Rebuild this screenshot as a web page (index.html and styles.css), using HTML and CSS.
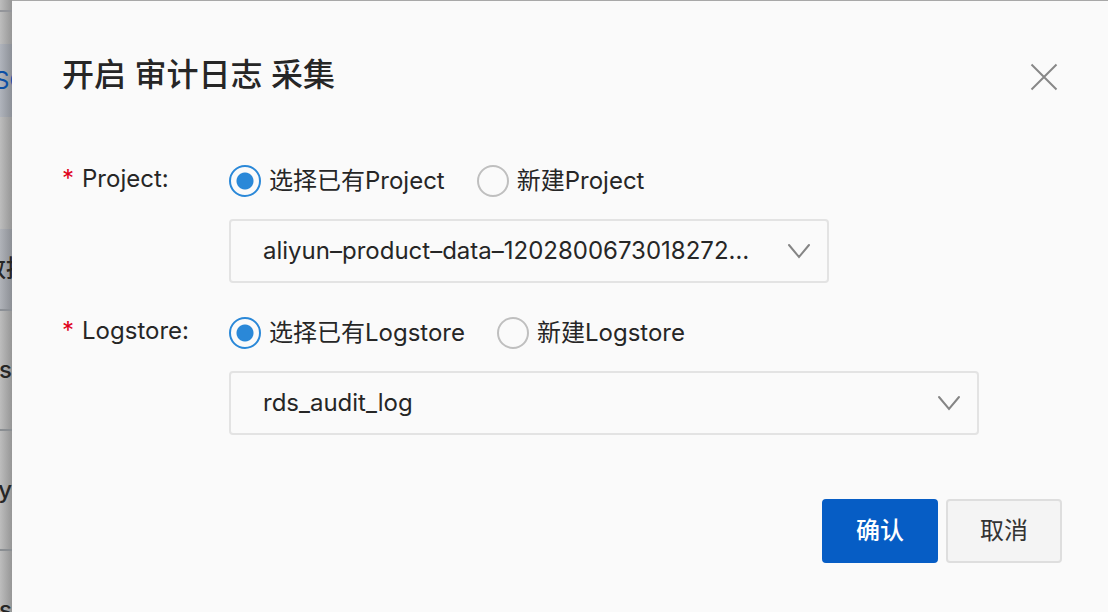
FILE: index.html
```html
<!DOCTYPE html>
<html lang="zh-CN">
<head>
<meta charset="utf-8">
<title>开启 审计日志 采集</title>
<link rel="stylesheet" href="styles.css">
</head>
<body>
<div class="page">
  <div class="backdrop" aria-hidden="true">
    <div class="strip strip-top"></div>
    <div class="strip strip-gap"></div>
    <div class="strip strip-tab"><span>SQ</span></div>
    <div class="strip strip-space"></div>
    <div class="strip strip-head"><span>数据</span></div>
    <div class="strip strip-row"><span>ns</span></div>
    <div class="strip strip-row"><span>ny</span></div>
    <div class="strip strip-row"><span>ns</span></div>
  </div>
  <main class="dialog" role="dialog" aria-labelledby="dialog-title">
    <header class="dialog-header">
      <h1 class="dialog-title" id="dialog-title">开启 审计日志 采集</h1>
      <button class="close" type="button" aria-label="关闭">
        <svg width="28" height="28" viewBox="0 0 28 28" fill="none" stroke="#878787" stroke-width="2"><path d="M1.500 1.500 26.500 26.500M26.500 1.500 1.500 26.500"/></svg>
      </button>
    </header>
    <form class="form">
      <div class="field">
        <div class="label" id="project-label"><span class="required">*</span><span>Project:</span></div>
        <div class="controls">
          <div class="radios" role="radiogroup" aria-labelledby="project-label">
            <label class="radio"><input type="radio" name="project" checked><span>选择已有Project</span></label>
            <label class="radio"><input type="radio" name="project"><span>新建Project</span></label>
          </div>
          <div class="select select-medium">
            <select aria-labelledby="project-label"><option>aliyun–product–data–1202800673018272…</option></select>
            <svg width="24" height="16" viewBox="0 0 24 16" fill="none" stroke="#858585" stroke-width="2" stroke-linecap="round"><path d="M2 2 12 14 22 2"/></svg>
          </div>
        </div>
      </div>
      <div class="field">
        <div class="label" id="logstore-label"><span class="required">*</span><span>Logstore:</span></div>
        <div class="controls">
          <div class="radios" role="radiogroup" aria-labelledby="logstore-label">
            <label class="radio"><input type="radio" name="logstore" checked><span>选择已有Logstore</span></label>
            <label class="radio"><input type="radio" name="logstore"><span>新建Logstore</span></label>
          </div>
          <div class="select select-wide">
            <select aria-labelledby="logstore-label"><option>rds_audit_log</option></select>
            <svg width="24" height="16" viewBox="0 0 24 16" fill="none" stroke="#858585" stroke-width="2" stroke-linecap="round"><path d="M2 2 12 14 22 2"/></svg>
          </div>
        </div>
      </div>
      <footer class="actions">
        <button class="button button-primary" type="submit">确认</button>
        <button class="button" type="button">取消</button>
      </footer>
    </form>
  </main>
</div>
</body>
</html>
```
FILE: styles.css
```css
* {
  box-sizing: border-box;
}

body {
  margin: 0;
  background: #a8a8a8;
  color: #262626;
  font-family: Inter, "Noto Sans CJK SC", sans-serif;
  font-size: 24px;
  line-height: 32px;
}

.page {
  display: flex;
  height: 100vh;
  overflow: hidden;
}

.backdrop {
  flex: 0 0 12px;
  overflow: hidden;
  background: linear-gradient(90deg, #bdbdbd, #969696);
  font-weight: 500;
}

.strip {
  display: flex;
  align-items: center;
  justify-content: flex-end;
  white-space: nowrap;
}

.strip-top {
  height: 12px;
  border-bottom: 2px solid #93959a;
}

.strip-gap {
  height: 32px;
}

.strip-tab {
  height: 73px;
  justify-content: flex-start;
  background: linear-gradient(90deg, #b0b4bc, #8c9097);
  color: #0b4fa5;
  font-weight: 400;
}

.strip-tab span {
  margin-left: -6px;
}

.strip-space {
  height: 112px;
}

.strip-head {
  height: 82px;
  justify-content: flex-start;
  border-bottom: 2px solid #8c9096;
  background: linear-gradient(90deg, #b0b3b9, #8c8f95);
}

.strip-head span {
  margin-left: -18px;
}

.strip-row {
  height: 120px;
  border-bottom: 2px solid #8a8e92;
}

.dialog {
  flex: 1;
  min-width: 0;
  margin-top: 1px;
  padding: 50px 46px 48px 50px;
  background: #fafafa;
}

.dialog-header {
  display: flex;
  align-items: flex-end;
  justify-content: space-between;
  margin-bottom: 64px;
  padding-right: 4px;
}

.dialog-title {
  margin: 0;
  font-size: 32px;
  font-weight: 500;
  line-height: 48px;
}

.close {
  display: flex;
  padding: 0 0 8px;
  border: 0;
  background: none;
  cursor: pointer;
}

.form {
  display: flex;
  flex-direction: column;
  gap: 32px;
}

.field {
  display: grid;
  grid-template-columns: 167px minmax(0, 1fr);
}

.label {
  display: flex;
  gap: 8px;
}

.required {
  color: #e0001b;
}

.controls {
  display: grid;
  gap: 22px;
  padding-top: 2px;
}

.radios {
  display: flex;
  gap: 32px;
}

.radio {
  display: flex;
  align-items: center;
  gap: 8px;
  cursor: pointer;
}

.radio input {
  width: 32px;
  height: 32px;
  margin: 0;
  border: 2px solid #bfbfbf;
  border-radius: 50%;
  appearance: none;
}

.radio input:checked {
  border-color: #2a88d8;
  background: radial-gradient(circle, #2a88d8 8px, transparent 9px);
}

.select {
  display: grid;
  align-items: center;
}

.select-medium {
  width: 600px;
  max-width: 100%;
}

.select-wide {
  width: 750px;
  max-width: 100%;
}

.select select {
  grid-area: 1 / 1;
  width: 100%;
  height: 64px;
  padding: 0 64px 0 32px;
  border: 2px solid #e3e3e3;
  border-radius: 4px;
  appearance: none;
  background: transparent;
  color: inherit;
  font: inherit;
  text-overflow: ellipsis;
}

.select svg {
  grid-area: 1 / 1;
  justify-self: end;
  margin-right: 18px;
  pointer-events: none;
}

.actions {
  display: flex;
  justify-content: flex-end;
  gap: 8px;
  margin-top: 32px;
}

.button {
  width: 116px;
  height: 64px;
  padding: 0;
  border: 2px solid #dedede;
  border-radius: 4px;
  background: #f4f4f4;
  color: #333;
  font: inherit;
  cursor: pointer;
}

.button-primary {
  border-color: #065dc5;
  background: #065dc5;
  color: #fff;
  font-weight: 500;
}
```
